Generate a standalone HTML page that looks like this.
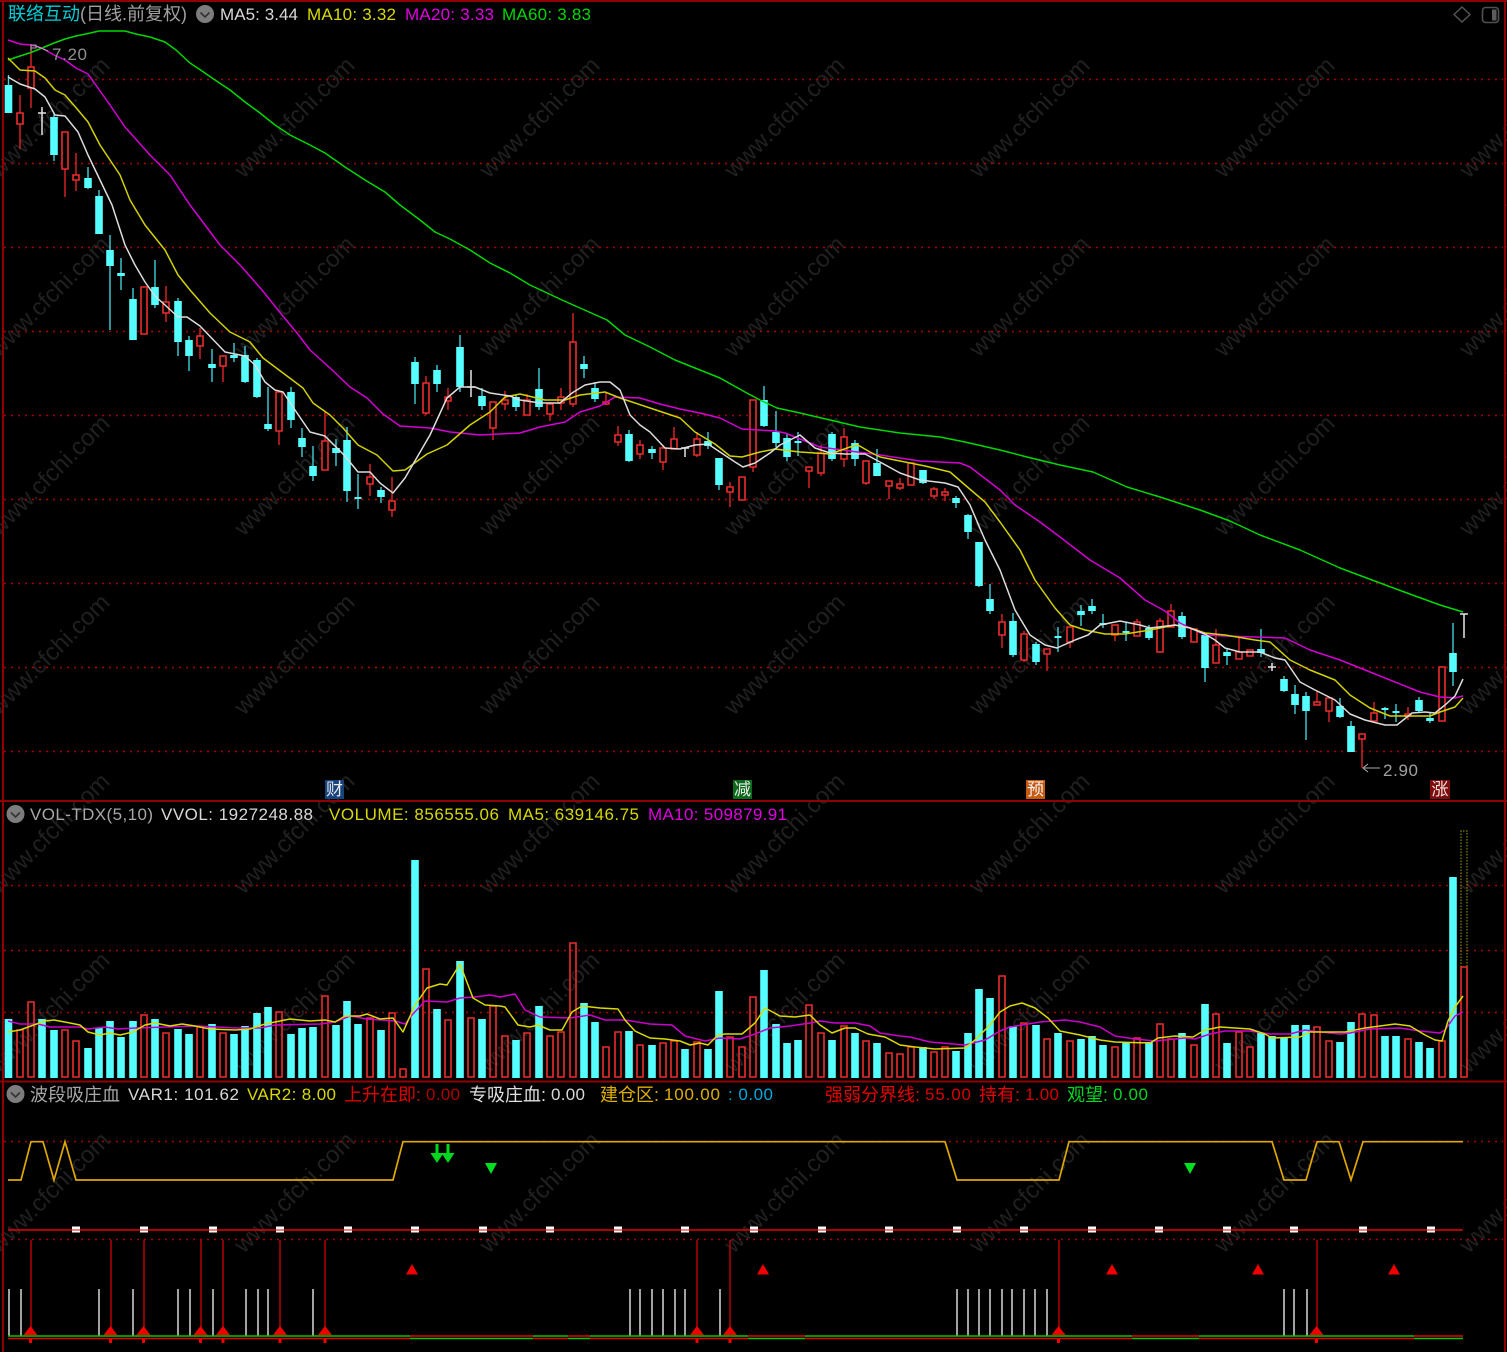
<!DOCTYPE html>
<html><head><meta charset="utf-8"><title>联络互动</title>
<style>
html,body{margin:0;padding:0;background:#000;width:1507px;height:1352px;overflow:hidden}
svg{display:block}
text{font-family:"Liberation Sans","Noto Sans CJK SC",sans-serif;font-size:17px}
.c{font-size:18px}
.wm text{font-size:24px;fill:#202020;text-anchor:middle}
.l{fill:none;stroke-width:1.5;stroke-linejoin:round}
.ic{fill:#7d7d7d}
.ch{fill:none;stroke:#333;stroke-width:1.6}
</style></head><body>
<svg width="1507" height="1352" viewBox="0 0 1507 1352" xmlns="http://www.w3.org/2000/svg">
<rect width="1507" height="1352" fill="#000"/>
<g class="wm" transform="translate(4,6)">
<text transform="translate(51,117) rotate(-45)">www.cfchi.com</text><text transform="translate(296,117) rotate(-45)">www.cfchi.com</text><text transform="translate(541,117) rotate(-45)">www.cfchi.com</text><text transform="translate(786,117) rotate(-45)">www.cfchi.com</text><text transform="translate(1031,117) rotate(-45)">www.cfchi.com</text><text transform="translate(1276,117) rotate(-45)">www.cfchi.com</text><text transform="translate(1521,117) rotate(-45)">www.cfchi.com</text>
<text transform="translate(51,296) rotate(-45)">www.cfchi.com</text><text transform="translate(296,296) rotate(-45)">www.cfchi.com</text><text transform="translate(541,296) rotate(-45)">www.cfchi.com</text><text transform="translate(786,296) rotate(-45)">www.cfchi.com</text><text transform="translate(1031,296) rotate(-45)">www.cfchi.com</text><text transform="translate(1276,296) rotate(-45)">www.cfchi.com</text><text transform="translate(1521,296) rotate(-45)">www.cfchi.com</text>
<text transform="translate(51,475) rotate(-45)">www.cfchi.com</text><text transform="translate(296,475) rotate(-45)">www.cfchi.com</text><text transform="translate(541,475) rotate(-45)">www.cfchi.com</text><text transform="translate(786,475) rotate(-45)">www.cfchi.com</text><text transform="translate(1031,475) rotate(-45)">www.cfchi.com</text><text transform="translate(1276,475) rotate(-45)">www.cfchi.com</text><text transform="translate(1521,475) rotate(-45)">www.cfchi.com</text>
<text transform="translate(51,654) rotate(-45)">www.cfchi.com</text><text transform="translate(296,654) rotate(-45)">www.cfchi.com</text><text transform="translate(541,654) rotate(-45)">www.cfchi.com</text><text transform="translate(786,654) rotate(-45)">www.cfchi.com</text><text transform="translate(1031,654) rotate(-45)">www.cfchi.com</text><text transform="translate(1276,654) rotate(-45)">www.cfchi.com</text><text transform="translate(1521,654) rotate(-45)">www.cfchi.com</text>
<text transform="translate(51,833) rotate(-45)">www.cfchi.com</text><text transform="translate(296,833) rotate(-45)">www.cfchi.com</text><text transform="translate(541,833) rotate(-45)">www.cfchi.com</text><text transform="translate(786,833) rotate(-45)">www.cfchi.com</text><text transform="translate(1031,833) rotate(-45)">www.cfchi.com</text><text transform="translate(1276,833) rotate(-45)">www.cfchi.com</text><text transform="translate(1521,833) rotate(-45)">www.cfchi.com</text>
<text transform="translate(51,1012) rotate(-45)">www.cfchi.com</text><text transform="translate(296,1012) rotate(-45)">www.cfchi.com</text><text transform="translate(541,1012) rotate(-45)">www.cfchi.com</text><text transform="translate(786,1012) rotate(-45)">www.cfchi.com</text><text transform="translate(1031,1012) rotate(-45)">www.cfchi.com</text><text transform="translate(1276,1012) rotate(-45)">www.cfchi.com</text><text transform="translate(1521,1012) rotate(-45)">www.cfchi.com</text>
<text transform="translate(51,1192) rotate(-45)">www.cfchi.com</text><text transform="translate(296,1192) rotate(-45)">www.cfchi.com</text><text transform="translate(541,1192) rotate(-45)">www.cfchi.com</text><text transform="translate(786,1192) rotate(-45)">www.cfchi.com</text><text transform="translate(1031,1192) rotate(-45)">www.cfchi.com</text><text transform="translate(1276,1192) rotate(-45)">www.cfchi.com</text><text transform="translate(1521,1192) rotate(-45)">www.cfchi.com</text>
</g>

<!-- grid -->
<path d="M4 79.500H1503M4 163.500H1503M4 247.500H1503M4 331.500H1503M4 415.500H1503M4 499.500H1503M4 583.500H1503M4 667.500H1503M4 751.500H1503M4 885.500H1503M4 950.500H1503M4 1012.500H1503M4 1141.500H1503M4 1239.500H1503" stroke="#a80000" stroke-width="1.500" stroke-dasharray="2 5" fill="none"/>

<!-- cyan wicks -->
<path stroke="#3fd0d8" stroke-width="1.4" fill="none" d="M8.500 75V113M54 113V161M88 167V189M99 190V234M110 235V330M121 258V290M133 288V340M155 260V308M178 298V356M189 336V371M212 349V382M234 343V362M245 346V383M257 358V398M268 387V431M291 387V428M302 428V457M313 446V481M336 439V466M347 427V502M358 474V509M381 487V503M415 357V404M437 365V392M460 335V392M482 388V410M516 394V411M539 368V410M584 356V378M595 382V402M629 430V462M652 446V459M708 432V449M719 458V490M764 386V427M776 411V447M787 433V461M798 432V456M832 432V461M855 440V466M877 449V476M923 470V484M956 496V508M968 514V539M979 542V587M990 584V614M1013 613V657M1036 642V665M1058 627V652M1081 605V626M1092 599V614M1103 614V628M1126 622V641M1149 625V640M1182 612V639M1205 635V682M1227 648V665M1261 629V657M1284 676V692M1295 685V714M1306 692V740M1340 698V718M1351 721V752M1385 707V719M1396 704V722M1419 697V713M1430 713V723M1453 623V686"/>
<!-- cyan bodies -->
<path fill="#55ffff" d="M4.700 85h7.600v28h-7.600zM50.200 117h7.600v38h-7.600zM84.200 178h7.600v10h-7.600zM95.200 196h7.600v38h-7.600zM106.200 250h7.600v16h-7.600zM117.200 273h7.600v3h-7.600zM129.200 299h7.600v41h-7.600zM151.200 287h7.600v18h-7.600zM174.200 301h7.600v41h-7.600zM185.200 340h7.600v16h-7.600zM208.200 364h7.600v4h-7.600zM230.200 355h7.600v3h-7.600zM241.200 355h7.600v27h-7.600zM253.200 360h7.600v37h-7.600zM264.200 424h7.600v5h-7.600zM287.200 392h7.600v28h-7.600zM298.200 438h7.600v9h-7.600zM309.200 466h7.600v10h-7.600zM332.200 448h7.600v5h-7.600zM343.200 440h7.600v51h-7.600zM354.500 497h7v2h-7zM377.200 490h7.600v7h-7.600zM411.200 362h7.600v22h-7.600zM433.200 370h7.600v14h-7.600zM456.200 347h7.600v40h-7.600zM478.200 396h7.600v10h-7.600zM512.200 397h7.600v10h-7.600zM535.200 389h7.600v18h-7.600zM580.200 364h7.600v5h-7.600zM591.200 388h7.600v11h-7.600zM625.200 434h7.600v27h-7.600zM648.200 449h7.600v4h-7.600zM704.200 441h7.600v5h-7.600zM715.200 458h7.600v27h-7.600zM760.200 400h7.600v26h-7.600zM772.200 432h7.600v11h-7.600zM783.200 438h7.600v19h-7.600zM794.500 441h7v2h-7zM828.200 434h7.600v25h-7.600zM851.200 443h7.600v16h-7.600zM873.200 463h7.600v13h-7.600zM919.200 470h7.600v13h-7.600zM952.200 498h7.600v5h-7.600zM964.200 515h7.600v17h-7.600zM975.200 542h7.600v44h-7.600zM986.200 599h7.600v12h-7.600zM1009.200 621h7.600v34h-7.600zM1032.200 644h7.600v18h-7.600zM1054.500 636h7v2h-7zM1077.200 611h7.600v4h-7.600zM1088.200 606h7.600v5h-7.600zM1099.500 623h7v2h-7zM1122.500 631h7v2h-7zM1145.200 628h7.600v10h-7.600zM1178.200 616h7.600v21h-7.600zM1201.200 635h7.600v33h-7.600zM1223.200 652h7.600v4h-7.600zM1257.200 649h7.600v4h-7.600zM1280.200 679h7.600v12h-7.600zM1291.200 694h7.600v11h-7.600zM1302.200 696h7.600v15h-7.600zM1336.200 706h7.600v11h-7.600zM1347.200 726h7.600v26h-7.600zM1381.500 708h7v2h-7zM1392.500 711h7v2h-7zM1415.200 700h7.600v11h-7.600zM1426.200 718h7.600v3h-7.600zM1449.200 653h7.600v19h-7.600z"/>
<!-- red wicks -->
<path stroke="#e02424" stroke-width="1.4" fill="none" d="M20 95V149M31 44V108M65 132V197M76 153V191M166 286V322M200 328V359M223 355V382M279 392V445M325 412V470M370 464V496M392 477V517M426 376V415M448 388V410M493 402V440M505 391V410M527 394V415M550 402V421M561 388V410M573 313V407M606 393V405M618 426V446M640 440V459M663 445V470M674 427V449M697 432V457M730 482V507M753 400V472M809 467V488M821 445V476M844 428V467M866 461V485M889 481V499M900 478V490M934 487V499M945 488V501M1002 614V648M1024 631V662M1047 649V671M1070 627V648M1115 625V641M1137 619V636M1160 618V653M1171 604V627M1216 629V663M1239 637V659M1317 691V705M1329 697V722M1362 734V768M1374 702V721M1408 707V720"/>
<!-- red bodies -->
<path fill="#000" stroke="#ec2c2c" stroke-width="1.600" d="M17 113h6v11h-6zM28 67h6v21h-6zM62 132h6v37h-6zM73 175h6v5h-6zM141 287h6v47h-6zM163 302h6v11h-6zM197 336h6v10h-6zM220 356h6v10h-6zM276 392h6v39h-6zM322 441h6v29h-6zM367 477h6v7h-6zM389 501h6v9h-6zM423 383h6v30h-6zM445 397h6v4h-6zM490 402h6v26h-6zM502 400h6v4h-6zM524 400h6v15h-6zM547 404h6v10h-6zM558 397h6v6h-6zM570 342h6v62h-6zM603 402h6v2h-6zM615 435h6v7h-6zM637 445h6v9h-6zM660 448h6v14h-6zM671 439h6v10h-6zM694 439h6v16h-6zM727 487h6v5h-6zM739 477h6v23h-6zM750 400h6v67h-6zM806 467h6v4h-6zM818 453h6v20h-6zM841 437h6v22h-6zM863 461h6v22h-6zM886 481h6v5h-6zM897 484h6v4h-6zM908 463h6v22h-6zM931 489h6v7h-6zM942 492h6v3h-6zM999 622h6v13h-6zM1021 634h6v26h-6zM1044 649h6v5h-6zM1067 627h6v15h-6zM1112 625h6v10h-6zM1134 622h6v14h-6zM1157 621h6v31h-6zM1168 611h6v16h-6zM1191 629h6v13h-6zM1213 645h6v18h-6zM1236 652h6v7h-6zM1247 650h6v6h-6zM1314 702h6v3h-6zM1326 698h6v13h-6zM1359 734h6v5h-6zM1371 713h6v8h-6zM1405 714h6v2h-6zM1439 667h6v54h-6z"/>
<!-- white doji -->
<path stroke="#e6e6e6" stroke-width="1.500" fill="none" d="M42 107V135M38 113H46M471 370V397M467 387H475M685 447V457M681 448H689M1272 663V671M1268 667H1276M1464 614V638M1460 614H1468"/>

<!-- MA lines -->
<polyline class="l" stroke="#00d800" points="8,60 20,56 31,52.5 42,48 54,43 65,39 76,36 88,33.5 99,31 110,31 125,31 136,34 150,37 165,42 176,50 190,63 202,71 215,80 230,90 245,102 260,113 275,125 290,135 310,145 325,153 345,167 365,180 385,192 400,205 420,220 435,232 450,239 470,250 490,263 510,273 530,285 562,300 607,320 625,335 650,347 675,360 700,370 720,378 745,392 760,400 777,408 800,413 830,420 860,427 900,433 940,437 965,442 1000,450 1027,457 1060,465 1093,472 1127,487 1160,497 1200,510 1230,521 1260,535 1300,550 1340,568 1372,580 1407,593 1440,605 1463,612"/>
<polyline class="l" stroke="#d400d4" points="8,40 20,44 31,45 42,48 54,55 65,60 76,68 88,74 110,105 125,127 150,155 170,175 190,205 220,245 240,265 262,290 282,315 297,333 310,350 330,368 350,387 367,398 383,414 400,426 430,428 450,432 480,435 520,433 540,427 565,422 580,412 600,406 615,397 640,398 660,404 680,409 700,413 720,418 742,429 775,431 785,433 820,447 880,455 920,461 960,463 970,467 1000,490 1015,505 1040,522 1060,537 1090,560 1120,578 1145,600 1165,611 1180,623 1205,635 1225,636 1285,638 1310,650 1340,660 1370,672 1420,692 1440,697 1455,698 1463,696"/>
<polyline class="l" stroke="#d2d200" points="8,58 20,70 35,71 45,78 55,90 65,95 78,110 88,122 100,145 120,175 130,200 145,225 165,250 178,275 190,290 210,313 230,332 250,342 263,358 283,373 303,388 313,403 330,415 343,428 358,445 377,455 393,471 405,470 427,454 447,445 470,425 490,412 505,397 520,394 545,400 565,400 580,395 605,392 620,398 650,408 680,418 695,432 715,444 730,456 742,457 760,452 775,449 800,452 830,454 850,447 858,445 870,452 880,457 900,461 925,466 950,472 965,485 985,502 1000,522 1020,550 1035,580 1055,608 1070,625 1085,630 1105,634 1125,634 1150,630 1175,625 1190,628 1205,633 1225,635 1255,640 1270,642 1290,660 1310,670 1335,680 1350,695 1370,708 1390,716 1430,716 1440,712 1455,707 1463,698"/>
<polyline class="l" stroke="#dcdcdc" points="8,77 20,84 35,89 45,97 55,115 65,116 78,132 88,155 100,180 112,205 125,245 135,265 145,282 155,296 165,305 178,317 187,317 200,326 225,352 245,356 255,365 265,382 275,390 283,392 295,410 310,432 325,436 345,456 358,472 370,472 380,483 393,493 405,478 430,435 447,398 460,387 475,387 490,393 510,396 520,400 540,403 560,403 572,393 585,385 600,382 610,382 620,390 630,415 640,425 650,432 665,448 680,449 695,445 708,444 720,452 735,462 743,467 755,463 770,453 780,445 800,435 815,448 830,453 845,454 865,454 880,462 900,473 920,480 945,483 958,487 970,505 985,540 1000,570 1015,610 1030,635 1045,645 1057,648 1075,640 1088,635 1100,625 1120,621 1140,625 1150,628 1175,625 1190,628 1205,634 1215,640 1225,648 1240,652 1260,652 1275,658 1285,660 1300,682 1315,690 1335,700 1350,714 1365,720 1385,725 1397,725 1412,713 1425,712 1435,713 1445,705 1455,696 1463,679"/>

<!-- price labels -->
<path d="M31 45V51M31 45H36V48H31M36 46L48 51" stroke="#a8a8a8" stroke-width="1" fill="none"/>
<text x="52" y="60" fill="#909090" textLength="35">7.20</text>
<path d="M1363 768H1380M1363 768L1368 764M1363 768L1368 772" stroke="#a8a8a8" stroke-width="1.100" fill="none"/>
<text x="1383" y="776" fill="#a0a0a0" textLength="35">2.90</text>

<!-- tags -->
<rect x="325" y="780" width="19" height="19" fill="#17437c"/><text x="334.500" y="795" fill="#e8e8e8" text-anchor="middle" style="font-size:17px">财</text>
<rect x="733" y="780" width="19" height="19" fill="#0c6a1c"/><text x="742.500" y="795" fill="#e8e8e8" text-anchor="middle" style="font-size:17px">减</text>
<rect x="1026" y="780" width="19" height="19" fill="#c85a10"/><text x="1035.500" y="795" fill="#f0f0f0" text-anchor="middle" style="font-size:17px">预</text>
<rect x="1430" y="780" width="20" height="19" fill="#7e0c0c"/><text x="1440" y="795" fill="#f0e0e0" text-anchor="middle" style="font-size:17px">涨</text>

<!-- volume bars cyan -->
<path fill="#55ffff" d="M4.700 1019h7.600v59h-7.600zM38.200 1019h7.600v59h-7.600zM50.200 1030h7.600v48h-7.600zM84.200 1048h7.600v30h-7.600zM95.200 1028h7.600v50h-7.600zM106.200 1021h7.600v57h-7.600zM117.200 1037h7.600v41h-7.600zM129.200 1021h7.600v57h-7.600zM151.200 1019h7.600v59h-7.600zM174.200 1029h7.600v49h-7.600zM185.200 1034h7.600v44h-7.600zM208.200 1024h7.600v54h-7.600zM230.200 1034h7.600v44h-7.600zM241.200 1026h7.600v52h-7.600zM253.200 1013h7.600v65h-7.600zM264.200 1007h7.600v71h-7.600zM287.200 1034h7.600v44h-7.600zM298.200 1028h7.600v50h-7.600zM309.200 1027h7.600v51h-7.600zM332.200 1025h7.600v53h-7.600zM343.200 1001h7.600v77h-7.600zM354.200 1024h7.600v54h-7.600zM377.200 1030h7.600v48h-7.600zM411.200 860h7.600v218h-7.600zM433.200 1009h7.600v69h-7.600zM456.200 961h7.600v117h-7.600zM478.200 1019h7.600v59h-7.600zM512.200 1040h7.600v38h-7.600zM535.200 1006h7.600v72h-7.600zM580.200 1003h7.600v75h-7.600zM591.200 1022h7.600v56h-7.600zM625.200 1031h7.600v47h-7.600zM648.200 1045h7.600v33h-7.600zM681.200 1049h7.600v29h-7.600zM704.200 1049h7.600v29h-7.600zM715.200 991h7.600v87h-7.600zM760.200 970h7.600v108h-7.600zM772.200 1024h7.600v54h-7.600zM783.200 1043h7.600v35h-7.600zM794.200 1040h7.600v38h-7.600zM828.200 1040h7.600v38h-7.600zM851.200 1033h7.600v45h-7.600zM873.200 1043h7.600v35h-7.600zM919.200 1047h7.600v31h-7.600zM952.200 1051h7.600v27h-7.600zM964.200 1033h7.600v45h-7.600zM975.200 989h7.600v89h-7.600zM986.200 998h7.600v80h-7.600zM1009.200 1026h7.600v52h-7.600zM1032.200 1025h7.600v53h-7.600zM1054.200 1033h7.600v45h-7.600zM1077.200 1039h7.600v39h-7.600zM1088.200 1036h7.600v42h-7.600zM1099.200 1045h7.600v33h-7.600zM1122.200 1043h7.600v35h-7.600zM1145.200 1042h7.600v36h-7.600zM1178.200 1033h7.600v45h-7.600zM1201.200 1004h7.600v74h-7.600zM1223.200 1043h7.600v35h-7.600zM1257.200 1033h7.600v45h-7.600zM1268.200 1036h7.600v42h-7.600zM1280.200 1037h7.600v41h-7.600zM1291.200 1025h7.600v53h-7.600zM1302.200 1025h7.600v53h-7.600zM1336.200 1042h7.600v36h-7.600zM1347.200 1022h7.600v56h-7.600zM1381.200 1036h7.600v42h-7.600zM1392.200 1036h7.600v42h-7.600zM1415.200 1042h7.600v36h-7.600zM1426.200 1048h7.600v30h-7.600zM1449.200 877h7.600v201h-7.600z"/>
<!-- volume bars red -->
<path fill="none" stroke="#ec2c2c" stroke-width="1.600" d="M17 1030h6v47h-6zM28 1002h6v75h-6zM62 1030h6v47h-6zM73 1041h6v36h-6zM141 1015h6v62h-6zM163 1033h6v44h-6zM197 1027h6v50h-6zM220 1033h6v44h-6zM276 1012h6v65h-6zM322 996h6v81h-6zM367 1018h6v59h-6zM389 1013h6v64h-6zM400 1069h6v8h-6zM423 969h6v108h-6zM445 1020h6v57h-6zM468 1018h6v59h-6zM490 1006h6v71h-6zM502 1036h6v41h-6zM524 1033h6v44h-6zM547 1036h6v41h-6zM558 1032h6v45h-6zM570 943h6v134h-6zM603 1047h6v30h-6zM615 1032h6v45h-6zM637 1045h6v32h-6zM660 1043h6v34h-6zM671 1041h6v36h-6zM694 1042h6v35h-6zM727 1037h6v40h-6zM739 1047h6v30h-6zM750 997h6v80h-6zM806 1005h6v72h-6zM818 1033h6v44h-6zM841 1026h6v51h-6zM863 1041h6v36h-6zM886 1053h6v24h-6zM897 1054h6v23h-6zM908 1047h6v30h-6zM931 1052h6v25h-6zM942 1047h6v30h-6zM999 976h6v101h-6zM1021 1023h6v54h-6zM1044 1039h6v38h-6zM1067 1041h6v36h-6zM1112 1047h6v30h-6zM1134 1038h6v39h-6zM1157 1024h6v53h-6zM1168 1039h6v38h-6zM1191 1045h6v32h-6zM1213 1014h6v63h-6zM1236 1032h6v45h-6zM1247 1047h6v30h-6zM1314 1027h6v50h-6zM1326 1041h6v36h-6zM1359 1014h6v63h-6zM1371 1015h6v62h-6zM1405 1039h6v38h-6zM1439 1041h6v36h-6zM1461 967h6v110h-6z"/>
<path fill="none" stroke="#6e6e00" stroke-width="1.500" stroke-dasharray="1.500 1.500" d="M1461 967V831H1467V967"/>
<polyline class="l" stroke="#cc00cc" points="8,1021 20,1024 38,1024 50,1027 80,1027 88,1029 105,1027 118,1029 135,1028 198,1026 235,1028 260,1028 275,1025 320,1024 335,1022 350,1016 367,1019 395,1021 405,1024 412,1015 425,1001 447,1002 460,998 475,997 490,995 500,997 515,994 525,1010 540,1017 570,1018 590,1015 605,1020 625,1020 650,1024 672,1025 685,1036 705,1041 720,1038 740,1039 755,1034 770,1028 790,1026 810,1023 820,1021 835,1023 855,1023 870,1026 880,1033 900,1036 910,1037 930,1042 965,1045 985,1040 1000,1031 1010,1027 1040,1022 1065,1020 1080,1022 1100,1027 1115,1036 1135,1039 1155,1041 1185,1038 1195,1039 1210,1034 1225,1031 1250,1031 1270,1034 1290,1034 1305,1030 1320,1032 1340,1034 1350,1033 1370,1029 1400,1028 1420,1031 1440,1033 1445,1030 1455,1016 1463,1012"/>
<polyline class="l" stroke="#dada00" points="8,1032 20,1030 31,1026 45,1021 54,1020 70,1023 80,1025 88,1032 100,1035 110,1033 120,1035 133,1032 145,1025 155,1023 170,1026 182,1024 195,1026 210,1029 235,1030 250,1029 265,1024 280,1021 290,1019 310,1021 325,1020 335,1022 345,1016 360,1016 367,1014 380,1019 393,1018 403,1032 415,1005 427,988 440,984 447,985 460,964 473,998 485,1005 500,1006 505,1007 518,1025 530,1027 538,1025 550,1030 562,1030 572,1012 582,1006 600,1008 618,1009 625,1020 635,1031 650,1038 665,1039 680,1041 690,1045 700,1043 708,1045 718,1035 725,1034 742,1034 755,1023 765,1008 780,1016 795,1017 810,1015 820,1025 832,1033 845,1028 855,1028 868,1034 885,1037 900,1045 915,1047 935,1049 965,1048 975,1040 990,1025 1000,1012 1010,1006 1022,1003 1035,1008 1048,1018 1060,1031 1080,1035 1100,1040 1115,1042 1150,1043 1158,1038 1175,1036 1193,1037 1205,1030 1220,1027 1250,1029 1265,1034 1272,1038 1300,1037 1310,1032 1345,1032 1365,1028 1380,1026 1395,1024 1410,1026 1425,1035 1435,1040 1442,1041 1448,1021 1455,1007 1463,996"/>

<!-- wave pane -->
<polyline fill="none" stroke="#e0a800" stroke-width="1.700" points="8,1180 21,1180 31,1141.700 43,1141.700 54,1180 65,1141.700 76,1180 393,1180 403,1141.700 945,1141.700 957,1180 1059,1180 1069,1141.700 1272,1141.700 1284,1180 1306,1180 1317,1141.700 1339,1141.700 1351,1180 1363,1141.700 1463,1141.700"/>
<path d="M8 1230H1463" stroke="#e80000" stroke-width="1.500"/>
<g fill="#fff" stroke="none">
<path d="M72 1226.500h8v6h-8zM140 1226.500h8v6h-8zM209 1226.500h8v6h-8zM276 1226.500h8v6h-8zM344 1226.500h8v6h-8zM411 1226.500h8v6h-8zM479 1226.500h8v6h-8zM546 1226.500h8v6h-8zM614 1226.500h8v6h-8zM681 1226.500h8v6h-8zM750 1226.500h8v6h-8zM818 1226.500h8v6h-8zM885 1226.500h8v6h-8zM953 1226.500h8v6h-8zM1020 1226.500h8v6h-8zM1088 1226.500h8v6h-8zM1155 1226.500h8v6h-8zM1223 1226.500h8v6h-8zM1290 1226.500h8v6h-8zM1359 1226.500h8v6h-8zM1427 1226.500h8v6h-8z"/>
</g>
<path d="M8 1230H1463" stroke="#e80000" stroke-width="1"/>
<!-- green down arrows -->
<path d="M437 1144V1157M448 1144V1157" stroke="#00d820" stroke-width="3"/>
<path fill="#00d820" d="M430.500 1153h13l-6.500 10zM441.500 1153h13l-6.500 10z"/>
<path fill="#00e020" d="M485 1163h12l-6 11zM1184 1163h12l-6 11z"/>
<!-- red up triangles -->
<path fill="#f00000" d="M412 1264l6 10.500h-12zM763 1264l6 10.500h-12zM1112 1264l6 10.500h-12zM1258 1264l6 10.500h-12zM1394 1264l6 10.500h-12z"/>
<!-- white bars -->
<path stroke="#d8d8d8" stroke-width="1.500" d="M9 1289V1336M21 1289V1336M99 1289V1336M133 1289V1336M178 1289V1336M190 1289V1336M213 1289V1336M246 1289V1336M258 1289V1336M268 1289V1336M313 1289V1336M630 1289V1336M640 1289V1336M652 1289V1336M663 1289V1336M675 1289V1336M685 1289V1336M720 1289V1336M957 1289V1336M968 1289V1336M979 1289V1336M990 1289V1336M1002 1289V1336M1012 1289V1336M1024 1289V1336M1035 1289V1336M1047 1289V1336M1284 1289V1336M1294 1289V1336M1307 1289V1336"/>
<!-- red tall lines with arrows -->
<path stroke="#b80000" stroke-width="1.500" d="M31 1240V1328M111 1240V1328M144 1240V1328M201 1240V1328M223 1240V1328M280 1240V1328M325 1240V1328M697 1240V1328M730 1240V1328M1059 1240V1328M1317 1240V1328"/>
<path fill="#f00000" d="M30.500 1326l7 9h-14zM110.500 1326l7 9h-14zM143.500 1326l7 9h-14zM200.500 1326l7 9h-14zM223 1326l7 9h-14zM280 1326l7 9h-14zM325 1326l7 9h-14zM697 1326l7 9h-14zM730 1326l7 9h-14zM1058.500 1326l7 9h-14zM1316.500 1326l7 9h-14z"/>
<path stroke="#f00000" stroke-width="3" d="M30.500 1338V1343M110.500 1338V1343M143.500 1338V1343M200.500 1338V1343M223 1338V1343M280 1338V1343M325 1338V1343M697 1338V1343M730 1338V1343M1058.500 1338V1343M1316.500 1338V1343"/>
<!-- bottom dual lines -->
<path stroke="#00c800" stroke-width="1.500" d="M8 1336H410M410 1338.500H533M533 1336H568M568 1338.500H590M590 1336H748M748 1338.500H805M805 1336H1132M1132 1338.500H1199M1199 1336H1414M1414 1338.500H1463"/>
<path stroke="#e80000" stroke-width="1.500" d="M8 1338.500H410M410 1336H533M533 1338.500H568M568 1336H590M590 1338.500H748M748 1336H805M805 1338.500H1132M1132 1336H1199M1199 1338.500H1414M1414 1336H1463"/>

<!-- borders -->
<path d="M0 1H1507M0 801H1507M0 1081.500H1507" stroke="#900000" stroke-width="2" fill="none"/>
<path d="M3 0V1352M1505 0V1352" stroke="#900000" stroke-width="2" fill="none"/>
<path d="M1506 79H1507M1506 121H1507M1506 163H1507M1506 205H1507M1506 247H1507M1506 289H1507M1506 331H1507M1506 373H1507M1506 415H1507M1506 457H1507M1506 499H1507M1506 541H1507M1506 583H1507M1506 625H1507M1506 667H1507M1506 709H1507M1506 751H1507" stroke="#900000"/>

<!-- header 1 -->
<text x="8" y="20" fill="#00cfd8" class="c">联络互动</text>
<text x="80" y="20" fill="#a0a0a0" class="c" textLength="107">(日线.前复权)</text>
<circle cx="205" cy="14" r="9" class="ic"/><path d="M200.500 12.500L205 17L209.500 12.500" class="ch"/>
<text x="220" y="20" fill="#d8d8d8" textLength="78">MA5: 3.44</text>
<text x="307" y="20" fill="#d8d800" textLength="89">MA10: 3.32</text>
<text x="405" y="20" fill="#e000e0" textLength="89">MA20: 3.33</text>
<text x="502" y="20" fill="#00d800" textLength="89">MA60: 3.83</text>
<path d="M1462 7l8 7.500-8 7.500-8-7.500z" fill="none" stroke="#555" stroke-width="1.400"/>
<rect x="1482.500" y="7.500" width="16" height="15" rx="3" fill="none" stroke="#505050" stroke-width="1.600"/><rect x="1492" y="9.500" width="4.500" height="11" fill="#5c5c5c"/>

<!-- header 2 -->
<circle cx="15.500" cy="814" r="9" class="ic"/><path d="M11 812.500L15.500 817L20 812.500" class="ch"/>
<text x="30" y="820" fill="#a8a8a8" textLength="123">VOL-TDX(5,10)</text>
<text x="161" y="820" fill="#d8d8d8" textLength="152">VVOL: 1927248.88</text>
<text x="329" y="820" fill="#d8d800" textLength="170">VOLUME: 856555.06</text>
<text x="508" y="820" fill="#d8d800" textLength="131">MA5: 639146.75</text>
<text x="648" y="820" fill="#e000e0" textLength="139">MA10: 509879.91</text>

<!-- header 3 -->
<circle cx="15.500" cy="1094" r="9" class="ic"/><path d="M11 1092.500L15.500 1097L20 1092.500" class="ch"/>
<text x="30" y="1101" fill="#a8a8a8" class="c">波段吸庄血</text>
<text x="128" y="1100" fill="#d8d8d8" textLength="111">VAR1: 101.62</text>
<text x="247" y="1100" fill="#d8d800" textLength="89">VAR2: 8.00</text>
<text x="344" y="1101" fill="#e00000" class="c">上升在即:</text>
<text x="426" y="1100" fill="#b00000" textLength="34">0.00</text>
<text x="469" y="1101" fill="#e0e0e0" class="c">专吸庄血:</text>
<text x="551" y="1100" fill="#d8d8d8" textLength="34">0.00</text>
<text x="600" y="1101" fill="#e0b000" class="c">建仓区:</text>
<text x="664" y="1100" fill="#e0b000" textLength="56">100.00</text>
<text x="728" y="1100" fill="#00a8e0" textLength="45">: 0.00</text>
<text x="825" y="1101" fill="#e80000" class="c">强弱分界线:</text>
<text x="925" y="1100" fill="#d80000" textLength="46">55.00</text>
<text x="979" y="1101" fill="#e80000" class="c">持有:</text>
<text x="1025" y="1100" fill="#d80000" textLength="34">1.00</text>
<text x="1067" y="1101" fill="#00d820" class="c">观望:</text>
<text x="1113" y="1100" fill="#00d820" textLength="35">0.00</text>
</svg>
</body></html>
